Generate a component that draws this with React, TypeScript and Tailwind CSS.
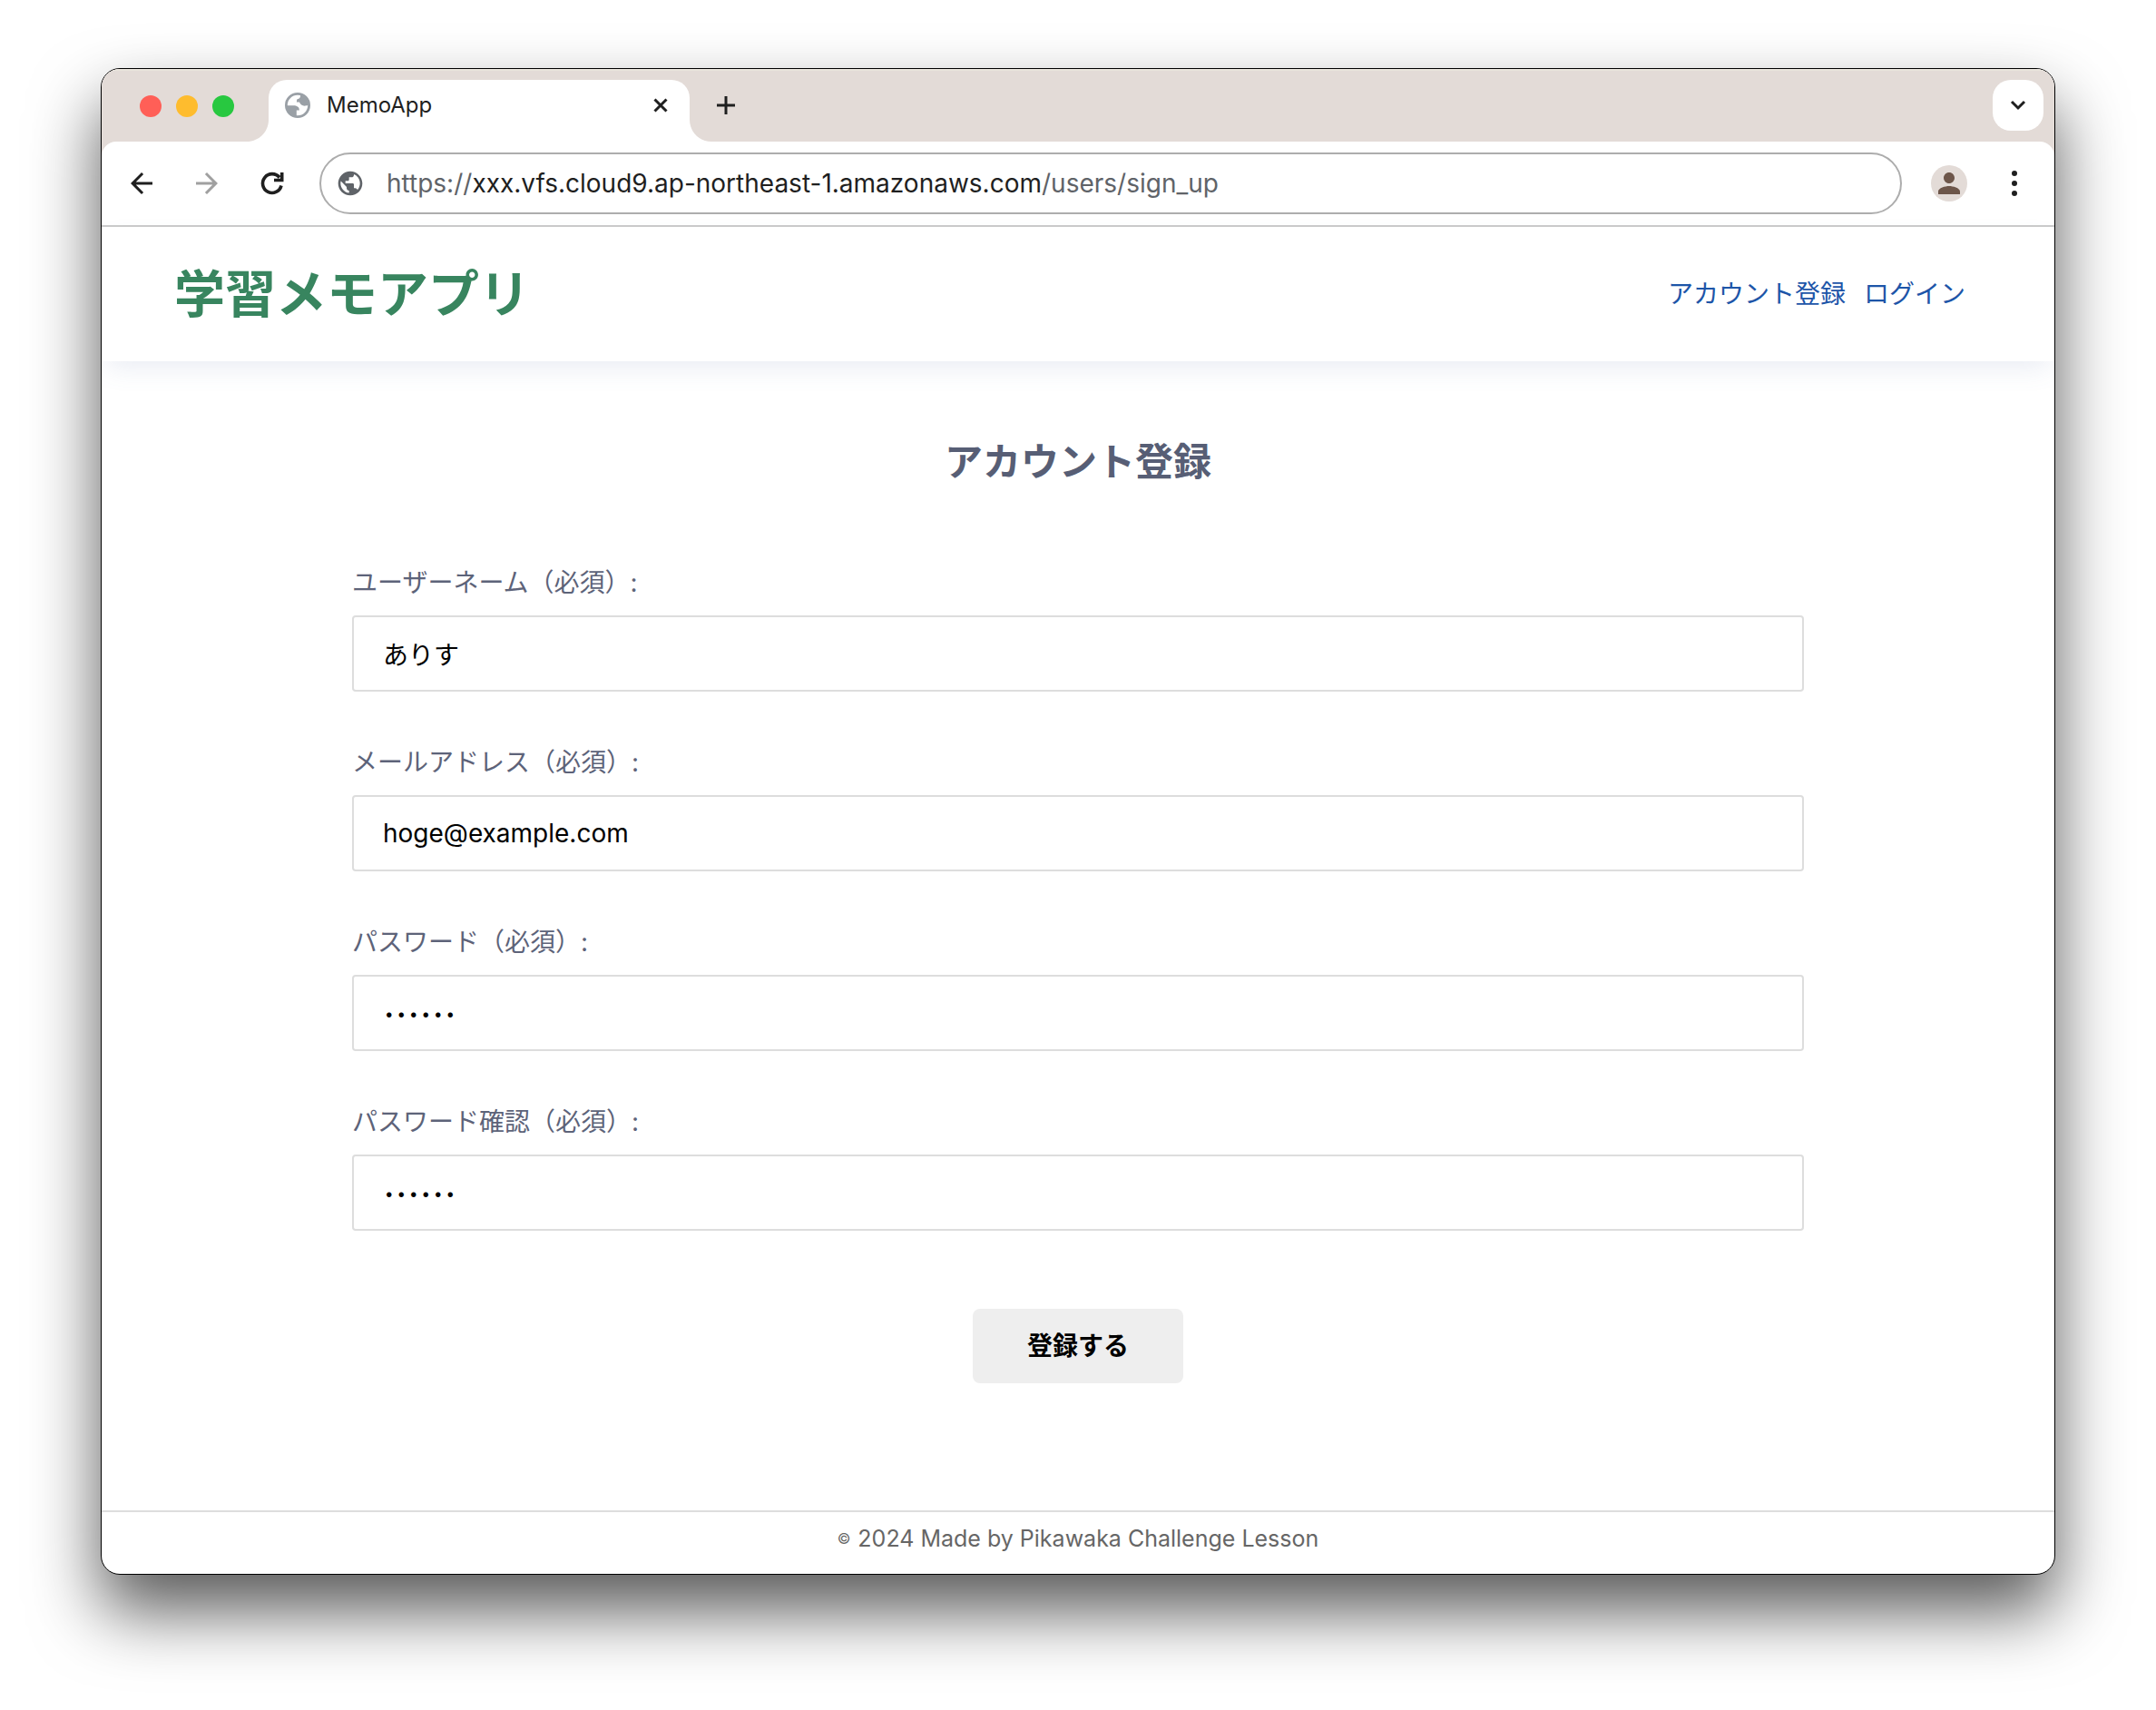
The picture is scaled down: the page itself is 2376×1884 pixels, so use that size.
import React from "react";
import { MdArrowBack, MdArrowForward, MdPerson, MdPublic } from "react-icons/md";

function TabFoot({ side }: { side: "left" | "right" }) {
  return (
    <svg
      viewBox="0 0 24 24"
      aria-hidden="true"
      className={
        side === "left"
          ? "absolute bottom-0 -left-6 size-6 fill-white"
          : "absolute bottom-0 -right-6 size-6 fill-white"
      }
    >
      {side === "left" ? (
        <path d="M24 0V24H0C13.3 24 24 13.3 24 0Z" />
      ) : (
        <path d="M0 0V24H24C10.7 24 0 13.3 0 0Z" />
      )}
    </svg>
  );
}

function FaviconGlobe() {
  return (
    <svg viewBox="0 0 28 28" className="size-7 shrink-0" aria-hidden="true">
      <circle cx="14" cy="14" r="12.6" fill="#fff" stroke="#9aa0a6" strokeWidth="2.8" />
      <path
        fill="#9aa0a6"
        d="M2 14.200H9.500C13 14.200 15.800 15.800 15.800 18.800V19.600H12.800V25.800L8 25.500L2 20Z"
      />
      <path
        fill="#9aa0a6"
        d="M17 2C17.400 5.400 16.200 6.800 13.600 7.200C12.600 8.200 13.400 9.600 12.800 10.600H16C17 13.600 19.600 15 22.600 14.600L26 14L24 6Z"
      />
    </svg>
  );
}

const fields = [
  { id: "name", label: "ユーザーネーム（必須）:", type: "text", value: "ありす" },
  { id: "email", label: "メールアドレス（必須）:", type: "email", value: "hoge@example.com" },
  { id: "password", label: "パスワード（必須）:", type: "password", value: "secret" },
  { id: "confirm", label: "パスワード確認（必須）:", type: "password", value: "secret" },
];

function TabStrip() {
  return (
    <div className="flex h-20 items-end bg-[#e3dbd7] pr-3 pl-[42px] shadow-[inset_0_2px_0_#e9e4dc]">
      <div className="flex h-full items-center gap-4 pt-0.5">
        <span className="size-6 rounded-full bg-[#ff5f57]" />
        <span className="size-6 rounded-full bg-[#febc2e]" />
        <span className="size-6 rounded-full bg-[#28c840]" />
      </div>
      <div className="relative ml-[38px] flex h-[68px] w-[464px] items-start rounded-t-[20px] bg-white pt-3.5 pr-6 pl-[18px]">
        <TabFoot side="left" />
        <TabFoot side="right" />
        <FaviconGlobe />
        <span className="ml-[18px] grow text-[24px] leading-7 text-[#1f1f1f]">MemoApp</span>
        <button type="button" aria-label="タブを閉じる" className="size-4 self-start pt-1.5">
          <svg viewBox="0 0 16 16" className="size-4" aria-hidden="true">
            <path d="M1.500 1.500L14.500 14.500M14.500 1.500L1.500 14.500" stroke="#1f1f1f" strokeWidth="3" />
          </svg>
        </button>
      </div>
      <button type="button" aria-label="新しいタブ" className="ml-[30px] self-center">
        <svg viewBox="0 0 20 20" className="size-5" aria-hidden="true">
          <path d="M10 0V20M0 10H20" stroke="#1f1f1f" strokeWidth="3" />
        </svg>
      </button>
      <button
        type="button"
        aria-label="タブを検索"
        className="mb-3 ml-auto flex size-14 items-center justify-center rounded-[20px] bg-white"
      >
        <svg viewBox="0 0 18 12" className="h-3 w-[18px]" aria-hidden="true">
          <path d="M2 2L9 9L16 2" fill="none" stroke="#1f1f1f" strokeWidth="3" />
        </svg>
      </button>
    </div>
  );
}

function Toolbar() {
  return (
    <div className="bg-[#e3dbd7]">
      <div className="flex items-center rounded-t-2xl border-b-2 border-[#cbcbcb] bg-white py-3 pr-8 pl-[26px]">
        <button type="button" aria-label="戻る">
          <MdArrowBack className="size-9 text-[#1f1f1f]" />
        </button>
        <button type="button" aria-label="進む" className="ml-9">
          <MdArrowForward className="size-9 text-[#a0a0a0]" />
        </button>
        <button type="button" aria-label="再読み込み" className="ml-9">
          <svg viewBox="0 0 36 36" className="size-9" aria-hidden="true">
            <path
              d="M28 20.500A10.400 10.400 0 1 1 26 11.500M28.700 6V14.500H20"
              fill="none"
              stroke="#1f1f1f"
              strokeWidth="3.600"
            />
          </svg>
        </button>
        <div className="ml-[34px] flex h-[68px] grow items-center rounded-full border-2 border-[#adadad] pl-4">
          <MdPublic className="size-8 shrink-0 text-[#5f6368]" />
          <div
            role="textbox"
            aria-label="アドレス"
            contentEditable
            suppressContentEditableWarning
            className="ml-6 grow text-[28px] leading-8 text-[#5f6368]"
          >
            https://<span className="text-[#1f1f1f]">xxx.vfs.cloud9.ap-northeast-1.amazonaws.com</span>
            /users/sign_up
          </div>
        </div>
        <button
          type="button"
          aria-label="プロフィール"
          className="ml-8 flex size-10 items-center justify-center rounded-full bg-[#e3dbd7]"
        >
          <MdPerson className="size-9 text-[#6d564a]" />
        </button>
        <button type="button" aria-label="メニュー" className="ml-10">
          <svg viewBox="0 0 24 36" className="h-9 w-6" aria-hidden="true">
            <g fill="#1f1f1f">
              <circle cx="12" cy="7" r="3" />
              <circle cx="12" cy="18" r="3" />
              <circle cx="12" cy="29" r="3" />
            </g>
          </svg>
        </button>
      </div>
    </div>
  );
}

export default function App() {
  return (
    <div className="min-h-screen bg-white px-[111px] pt-[75px] pb-[146px] font-['Inter','Noto_Sans_CJK_JP',sans-serif]">
      <div className="overflow-hidden rounded-[21px] border border-black bg-white shadow-[0_40px_76px_rgba(0,0,0,0.65)]">
        <TabStrip />
        <Toolbar />
        <header className="flex h-[148px] items-center justify-between pr-[98px] pl-20 shadow-[0_12px_28px_-6px_rgba(90,110,170,0.14)]">
          <a href="#" className="text-[56px] leading-none font-bold text-[#38855f]">
            学習メモアプリ
          </a>
          <nav className="flex gap-5 text-[28px] leading-[42px] text-[#1d55a8]">
            <a href="#signup">アカウント登録</a>
            <a href="#login">ログイン</a>
          </nav>
        </header>
        <main className="px-[276px] pt-20 pb-[140px]">
          <h1 className="text-center text-[42px] leading-[62px] font-bold text-[#575e75]">アカウント登録</h1>
          <form className="mt-20 flex flex-col gap-14" onSubmit={(e) => e.preventDefault()}>
            {fields.map((f) => (
              <div key={f.id} className="flex flex-col gap-3.5">
                <label htmlFor={f.id} className="text-[28px] leading-[44px] text-[#5d6379]">
                  {f.label}
                </label>
                <input
                  id={f.id}
                  type={f.type}
                  defaultValue={f.value}
                  className={
                    f.type === "password"
                      ? "h-[84px] rounded border-2 border-[#dddddd] bg-white px-8 text-[24px] font-extralight text-black"
                      : "h-[84px] rounded border-2 border-[#dddddd] bg-white px-8 text-[28px] text-black"
                  }
                />
              </div>
            ))}
            <button
              type="submit"
              className="mt-[30px] self-center rounded-lg bg-[#eeeeee] px-[60px] py-5 text-[28px] leading-[42px] font-bold text-black"
            >
              登録する
            </button>
          </form>
        </main>
        <footer className="flex items-center justify-center gap-2 border-t-2 border-[#dddddd] pt-2 pb-[18px] text-[25px] leading-[42px] text-[#666666]">
          <span className="text-[16px]">©</span>
          <small className="text-[25px]">2024 Made by Pikawaka Challenge Lesson</small>
        </footer>
      </div>
    </div>
  );
}
